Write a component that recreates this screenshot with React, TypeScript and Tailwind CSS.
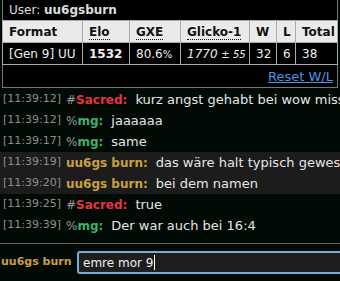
import React from "react";

const F = { fontFamily: '"DejaVu Sans", Verdana, sans-serif' };

type Msg = { t: string; sym?: string; name: string; color: string; text: string; own?: boolean };

const msgs: Msg[] = [
  { t: "[11:39:12]", sym: "#", name: "Sacred:", color: "text-[#e8343f]", text: "kurz angst gehabt bei wow miss" },
  { t: "[11:39:12]", sym: "%", name: "mg:", color: "text-[#3fae6c]", text: "jaaaaaa" },
  { t: "[11:39:17]", sym: "%", name: "mg:", color: "text-[#3fae6c]", text: "same" },
  { t: "[11:39:19]", name: "uu6gs burn:", color: "text-[#c9a040]", text: "das wäre halt typisch gewesen", own: true },
  { t: "[11:39:20]", name: "uu6gs burn:", color: "text-[#c9a040]", text: "bei dem namen", own: true },
  { t: "[11:39:25]", sym: "#", name: "Sacred:", color: "text-[#e8343f]", text: "true" },
  { t: "[11:39:39]", sym: "%", name: "mg:", color: "text-[#3fae6c]", text: "Der war auch bei 16:4" },
];

export default function App() {
  return (
    <div className="w-[340px] h-[281px] bg-[#010a05] overflow-hidden text-[#ddd]" style={F}>
      <div className="ml-[2px] w-[336px] h-[88px] bg-black border-x border-b border-[#777] flex flex-col">
        <div className="h-[20px] flex items-center pl-[6px] text-[12px] text-[#ddd]">
          User:&nbsp;<b>uu6gsburn</b>
        </div>
        <table className="border-collapse text-[12px] w-[336px] -ml-px">
          <thead>
            <tr className="bg-[#eaeaea] text-[#111] h-[22px]">
              <th className="border border-[#aaa] text-left pl-[6px] font-bold w-[80px]">Format</th>
              <th className="border border-[#aaa] text-left pl-[6px] font-bold w-[47px]"><span className="border-b border-dotted border-[#111]">Elo</span></th>
              <th className="border border-[#aaa] text-left pl-[6px] font-bold w-[51px]"><span className="border-b border-dotted border-[#111]">GXE</span></th>
              <th className="border border-[#aaa] text-left pl-[6px] font-bold w-[69px]"><span className="border-b border-dotted border-[#111]">Glicko-1</span></th>
              <th className="border border-[#aaa] text-left pl-[6px] font-bold w-[27px]">W</th>
              <th className="border border-[#aaa] text-left pl-[6px] font-bold w-[19px]">L</th>
              <th className="border border-[#aaa] text-left pl-[6px] font-bold">Total</th>
            </tr>
          </thead>
          <tbody>
            <tr className="h-[22px] text-[#eee]">
              <td className="border border-[#aaa] pl-[6px]">[Gen 9] UU</td>
              <td className="border border-[#aaa] pl-[6px] font-bold">1532</td>
              <td className="border border-[#aaa] pl-[6px]">80.6<span className="text-[10px]">%</span></td>
              <td className="border border-[#aaa] pl-[6px] italic">1770 <span className="text-[10px]">± 55</span></td>
              <td className="border border-[#aaa] pl-[6px]">32</td>
              <td className="border border-[#aaa] pl-[6px]">6</td>
              <td className="border border-[#aaa] pl-[6px]">38</td>
            </tr>
          </tbody>
        </table>
        <div className="flex justify-end pr-[4px] pt-[2px] text-[13px]">
          <span className="text-[#4d94e6] underline">Reset W/L</span>
        </div>
      </div>
      <div className="pt-[1px] h-[155px]">
        {msgs.map((m, i) => (
          <div key={i} className={`h-[21px] flex items-center pl-[3px] whitespace-nowrap ${m.own ? "bg-[#1c1c1c]" : ""}`}>
            <span className="text-[11px] text-[#8e8e8e]">{m.t}</span>
            <span className="text-[12px] ml-[5px]">
              {m.sym && <span className="text-[#999]">{m.sym}</span>}
              <b className={m.color}>{m.name}</b>
            </span>
            <span className="text-[13px] ml-[8px] text-[#e6e6e6]">{m.text}</span>
          </div>
        ))}
      </div>
      <div className="border-t border-[#666] h-[8px]" />
      <div className="flex items-center h-[23px]">
        <div className="w-[77px] pl-[1px] text-[11px] font-bold text-[#c9a040] whitespace-nowrap">uu6gs burn</div>
        <div className="flex-1 h-[23px] -mr-[4px] rounded-[3px] border-2 border-[#7aaad6] bg-[#1e1e1e] flex items-center pl-[4px] text-[12px] text-[#f0f0f0]">
          emre mor 9<span className="w-px h-[15px] bg-white ml-px" />
        </div>
      </div>
    </div>
  );
}
